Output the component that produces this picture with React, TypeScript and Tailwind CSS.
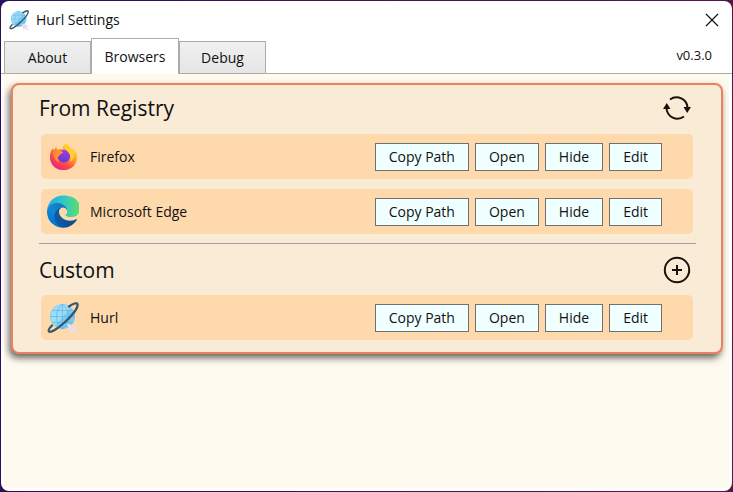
import React, { useState } from 'react';

interface IconProps {
  className?: string;
}

const HurlIcon: React.FC<IconProps> = ({ className }) => (
  <svg viewBox="0 0 32 32" className={className} fill="none" aria-hidden="true">
    <circle cx="15.5" cy="14.5" r="12.5" fill="#7ccaf3" />
    <path d="M7 6a12.500 12.500 0 0 1 17-1L8 24A12.500 12.500 0 0 1 7 6Z" fill="#9bdcf8" />
    <path
      d="M15.500 2v25M3 14.500h25M5 8.500h21M5 20.500h21M15.500 2c-8 7-8 18 0 25M15.500 2c8 7 8 18 0 25"
      stroke="#55b0e2"
      strokeWidth="0.6"
    />
    <path
      d="M22 4.500C26 1.500 30 .5 30.500 2c1 4-7 13-13 18.500C10.500 27 3.500 31 2 29.500c-1-1 .5-3.500 3-6"
      stroke="#36566d"
      strokeWidth="2.2"
      strokeLinecap="round"
    />
    <path d="m20 21.500 11.500 3.500-4 2.500 4 4-1.500 1.500-4.500-4-2 3.500-3.500-11Z" fill="#eddde2" />
  </svg>
);

const FirefoxIcon: React.FC<IconProps> = ({ className }) => (
  <svg viewBox="0 0 32 32" className={className} aria-hidden="true">
    <defs>
      <linearGradient id="fx-body" x1="26" y1="4" x2="8" y2="30" gradientUnits="userSpaceOnUse">
        <stop stopColor="#ffe634" />
        <stop offset="0.35" stopColor="#ffa12b" />
        <stop offset="0.65" stopColor="#ff4f42" />
        <stop offset="1" stopColor="#e82183" />
      </linearGradient>
      <linearGradient id="fx-globe" x1="18" y1="7" x2="14" y2="23" gradientUnits="userSpaceOnUse">
        <stop stopColor="#a33fe0" />
        <stop offset="1" stopColor="#6338d0" />
      </linearGradient>
      <linearGradient id="fx-head" x1="4" y1="6" x2="15" y2="19" gradientUnits="userSpaceOnUse">
        <stop stopColor="#ff7a2c" />
        <stop offset="1" stopColor="#ffa136" />
      </linearGradient>
    </defs>
    <path
      d="M19 1c2.500 1.500 4.500 4 5 6 2-.2 3 .7 4 2.500l.7-1C30.500 11.500 31 14 31 16.500 31 25 24.500 31 16 31S1 25 1 16.500c0-4 1.500-8 3.500-10l.7 2.500L8 5l1 3.500c2-.8 4-1 6-.5 0-3 1.500-5.500 4-7Z"
      fill="url(#fx-body)"
    />
    <circle cx="16.500" cy="15.500" r="7" fill="url(#fx-globe)" />
    <path
      d="M4 11c3-3 6-3 8-1l3.500.8c0 1.200-1.300 2-3 2.700-.8 1.300-1.500 2-3 3C9 19 10 21 12 22.500 8 22 5 18 4 11Z"
      fill="url(#fx-head)"
    />
    <path d="M19 1c-3 4-1 7 1.500 9.500 3.500 3.500 4 8 2.500 11.500 5-3 6-8.500 3.500-13C24.500 5.500 20 5 19 1Z" fill="#ffcf33" />
  </svg>
);

const EdgeIcon: React.FC<IconProps> = ({ className }) => (
  <svg viewBox="0 0 256 256" className={className} aria-hidden="true">
    <defs>
      <linearGradient id="edge-a" x1="90" y1="177" x2="250" y2="177" gradientUnits="userSpaceOnUse">
        <stop stopColor="#0c59a4" />
        <stop offset="1" stopColor="#114a8b" />
      </linearGradient>
      <linearGradient id="edge-b" x1="150" y1="100" x2="45" y2="225" gradientUnits="userSpaceOnUse">
        <stop stopColor="#1477bd" />
        <stop offset="0.5" stopColor="#1187d8" />
        <stop offset="1" stopColor="#0078d4" />
      </linearGradient>
      <linearGradient id="edge-c" x1="10" y1="80" x2="250" y2="90" gradientUnits="userSpaceOnUse">
        <stop stopColor="#29a9df" />
        <stop offset="0.45" stopColor="#2bc5cf" />
        <stop offset="1" stopColor="#5bdc72" />
      </linearGradient>
    </defs>
    <path
      d="M106 241a79 79 0 0 1-23-21 81 81 0 0 1 30-120c3-2 9-4 16-4a33 33 0 0 1 26 13 33 33 0 0 1 6 19c0-1 25-80-80-80C37 48 0 90 0 130a130 130 0 0 0 12 56 128 128 0 0 0 156 64 75 75 0 0 1-62-9Z"
      fill="url(#edge-b)"
    />
    <path
      d="M231 190a94 94 0 0 1-10 5 102 102 0 0 1-36 6c-47 0-89-32-89-74a31 31 0 0 1 17-27c-43 2-54 47-54 73 0 75 69 82 83 82 8 0 20-2 27-4h1a128 128 0 0 0 67-53 4 4 0 0 0-6-8Z"
      fill="url(#edge-a)"
    />
    <path
      d="M152 149c-1 1-3 3-3 6 0 3 1 6 5 8 15 11 45 9 45 9a64 64 0 0 0 33-9 67 67 0 0 0 33-58c0-24-9-40-12-47C232 15 180 0 128 0A128 128 0 0 0 0 126c1-36 37-66 81-66 3 0 23 0 42 10 17 9 26 20 32 31 6 11 7 25 7 30 0 6-3 14-10 18Z"
      fill="url(#edge-c)"
    />
  </svg>
);

const RefreshIcon: React.FC<IconProps> = ({ className }) => (
  <svg viewBox="0 0 28 28" className={className} fill="none" aria-hidden="true">
    <path d="M7 5.500A11 11 0 0 1 24.500 14M21 22.500A11 11 0 0 1 3.500 14" stroke="#1a120b" strokeWidth="2" />
    <path d="M20.500 13h7.500L24.200 19ZM0 15h7.500L3.800 9Z" fill="#1a120b" />
  </svg>
);

const AddIcon: React.FC<IconProps> = ({ className }) => (
  <svg viewBox="0 0 28 28" className={className} fill="none" stroke="#1a120b" strokeWidth="2" aria-hidden="true">
    <circle cx="14" cy="14" r="12.2" />
    <path d="M14 9v10M9 14h10" />
  </svg>
);

const CloseIcon: React.FC<IconProps> = ({ className }) => (
  <svg viewBox="0 0 14 14" className={className} fill="none" stroke="#111" strokeWidth="1.2" aria-hidden="true">
    <path d="m1 1 12 12M13 1 1 13" />
  </svg>
);

const actions = ['Copy Path', 'Open', 'Hide', 'Edit'];
const tabs = ['About', 'Browsers', 'Debug'];

interface BrowserRowProps {
  name: string;
  icon: React.ReactNode;
}

const BrowserRow: React.FC<BrowserRowProps> = ({ name, icon }) => (
  <li className="flex h-[45px] items-center rounded-[5px] bg-[#fed9ac] pl-1.5 pr-[31px]">
    <span className="flex w-8 items-center justify-center">{icon}</span>
    <span className="ml-[11px] flex-1">{name}</span>
    <div className="flex gap-1.5">
      {actions.map((action) => (
        <button
          key={action}
          type="button"
          className="h-7 border border-[#707070] bg-[#f0ffff] px-[13px] hover:bg-white"
        >
          {action}
        </button>
      ))}
    </div>
  </li>
);

export default function App() {
  const [activeTab, setActiveTab] = useState('Browsers');

  return (
    <div className="min-h-screen bg-linear-to-r from-[#2b0f5c] to-[#561449] p-px font-['Open_Sans','Noto_Sans',sans-serif] text-sm text-[#111]">
      <div className="flex min-h-[calc(100vh-2px)] flex-col overflow-hidden rounded-lg bg-white">
        <header className="flex h-[37px] items-center pl-2 pr-[13px]">
          <HurlIcon className="h-5 w-5" />
          <h1 className="ml-[7px] flex-1">Hurl Settings</h1>
          <button type="button" aria-label="Close">
            <CloseIcon className="h-3.5 w-3.5" />
          </button>
        </header>

        <div className="flex h-9 items-end border-b border-[#acacac] pl-[3px]">
          <div role="tablist" className="-mb-px flex items-end">
            {tabs.map((tab) => (
              <button
                key={tab}
                type="button"
                role="tab"
                aria-selected={tab === activeTab}
                onClick={() => setActiveTab(tab)}
                className={
                  tab === activeTab
                    ? 'h-9 w-[88px] border border-b-0 border-[#acacac] bg-white'
                    : 'h-[33px] w-[87px] border border-[#acacac] bg-linear-to-b from-[#f0f0f0] to-[#e5e5e5]'
                }
              >
                {tab}
              </button>
            ))}
          </div>
          <span className="ml-auto self-center pr-5 text-[13px]">v0.3.0</span>
        </div>

        <main className="mx-[3px] mb-[3px] flex-1 bg-[#fffaf0] pl-[7px] pr-1.5 pt-[9px]">
          <div className="rounded-lg border-2 border-[#e9825f] bg-[#faebd7] pb-3 shadow-[-2px_4px_7px_rgba(0,0,0,0.6)]">
            <section>
              <div className="flex h-[49px] items-center justify-between pb-1 pl-[26px] pr-[30px]">
                <h2 className="text-[21px]">From Registry</h2>
                <button type="button" aria-label="Refresh">
                  <RefreshIcon className="h-7 w-7" />
                </button>
              </div>
              <ul className="flex flex-col gap-2.5 px-7">
                <BrowserRow name="Firefox" icon={<FirefoxIcon className="h-[29px] w-[29px]" />} />
                <BrowserRow name="Microsoft Edge" icon={<EdgeIcon className="h-[33px] w-[33px]" />} />
              </ul>
            </section>

            <hr className="ml-[26px] mr-[25px] mt-[9px] border-[#a0a0a0]" />

            <section>
              <div className="flex h-[51px] items-center justify-between pl-[26px] pr-[30px]">
                <h2 className="text-[21px]">Custom</h2>
                <button type="button" aria-label="Add browser">
                  <AddIcon className="h-7 w-7" />
                </button>
              </div>
              <ul className="flex flex-col gap-2.5 px-7">
                <BrowserRow name="Hurl" icon={<HurlIcon className="h-8 w-8" />} />
              </ul>
            </section>
          </div>
        </main>
      </div>
    </div>
  );
}
